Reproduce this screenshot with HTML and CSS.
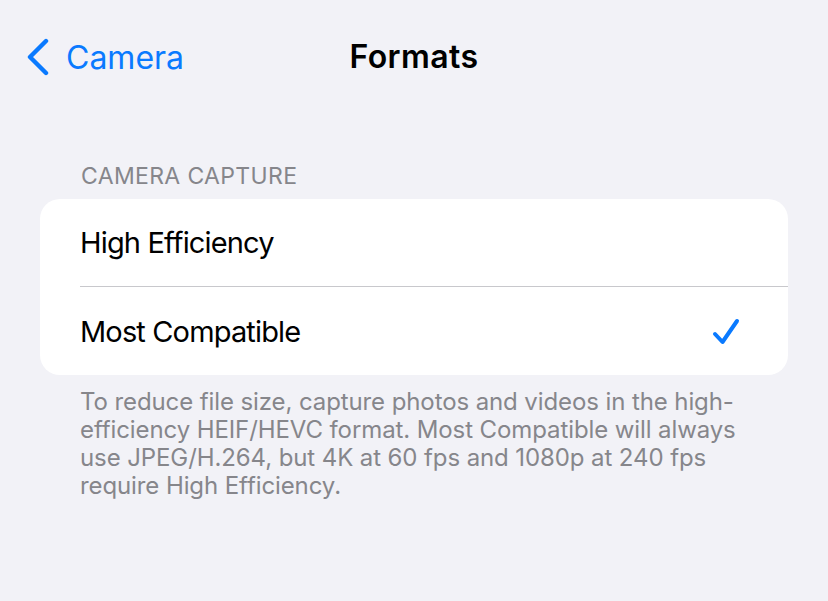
FILE: index.html
```html
<!DOCTYPE html>
<html lang="en">
<head>
<meta charset="utf-8">
<title>Formats</title>
<link rel="stylesheet" href="styles.css">
</head>
<body>
<div class="screen">
  <header class="nav">
    <a class="back" href="#">
      <svg class="chev" width="24" height="38" viewBox="0 0 24 38"><path d="M20 3 L4 19 L20 35" fill="none" stroke="#0a7aff" stroke-width="4.4" stroke-linecap="round" stroke-linejoin="round"/></svg>
      <span class="back-label">Camera</span>
    </a>
    <h1 class="title">Formats</h1>
  </header>
  <section class="group">
    <div class="group-header">CAMERA CAPTURE</div>
    <div class="card">
      <div class="row"><span class="row-label">High Efficiency</span></div>
      <div class="sep"></div>
      <div class="row row-last"><span class="row-label">Most Compatible</span>
        <svg class="check" width="30" height="28" viewBox="0 0 30 28"><path d="M3 16 L10.5 24 L25 3" fill="none" stroke="#0a7aff" stroke-width="4" stroke-linecap="round" stroke-linejoin="round"/></svg>
      </div>
    </div>
    <p class="group-footer">To reduce file size, capture photos and videos in the high-efficiency HEIF/HEVC format. Most Compatible will always use JPEG/H.264, but 4K at 60 fps and 1080p at 240 fps require High Efficiency.</p>
  </section>
</div>
</body>
</html>
```
FILE: styles.css
```css
html, body {
  margin: 0;
  padding: 0;
  background: #f2f2f7;
}
body {
  font-family: Inter, "Noto Sans", sans-serif;
  color: #000;
  -webkit-font-smoothing: antialiased;
}
.screen {
  width: 828px;
  height: 601px;
  overflow: hidden;
}
.nav {
  position: relative;
  height: 114px;
  display: flex;
  align-items: center;
  justify-content: center;
}
.back {
  position: absolute;
  left: 26px;
  top: 37px;
  display: flex;
  align-items: center;
  gap: 16px;
  text-decoration: none;
  color: #0a7aff;
}
.chev { display: block; }
.back-label {
  font-size: 32px;
  letter-spacing: 0;
  line-height: 38px;
  margin-top: 2px;
}
.title {
  margin: 0;
  font-size: 32px;
  font-weight: 600;
  letter-spacing: 0.4px;
  line-height: 38px;
  align-self: flex-start;
  margin-top: 38px;
}
.group {
  padding: 0 40px;
}
.group-header {
  padding: 48px 0 0 41px;
  font-size: 23px;
  color: #86868b;
  letter-spacing: 0.35px;
  line-height: 28px;
  height: 37px;
}
.card {
  background: #fff;
  border-radius: 20px;
  overflow: hidden;
}
.row {
  height: 87px;
  display: flex;
  align-items: center;
  justify-content: space-between;
  padding: 0 46px 0 40px;
}
.row-last {
  height: 88px;
}
.row-label {
  font-size: 29px;
  letter-spacing: -0.85px;
}
.sep {
  height: 1px;
  background: #c8c8cc;
  margin-left: 40px;
}
.check { display: block; margin-top: 2px; }
.group-footer {
  margin: 13px 0 0 0;
  padding: 0 40px 0 40px;
  font-size: 24px;
  line-height: 28px;
  color: #86868b;
  letter-spacing: -0.1px;
}
```
